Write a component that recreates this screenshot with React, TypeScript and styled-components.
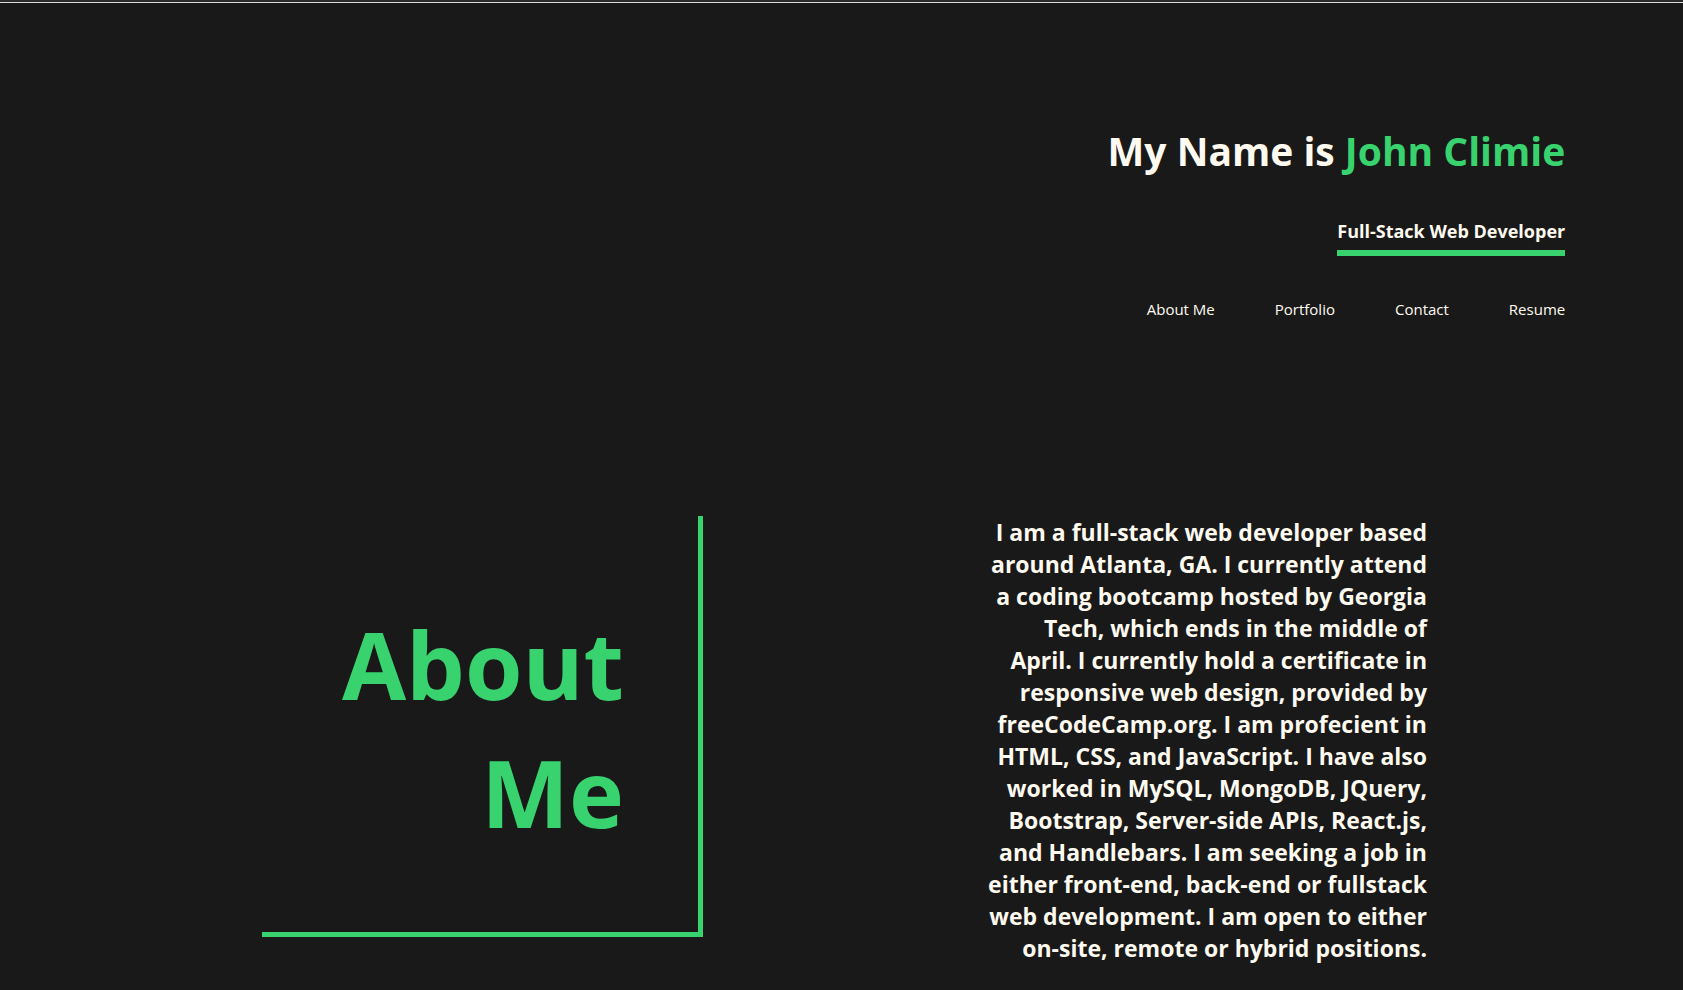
import React from "react";
import styled, { createGlobalStyle } from "styled-components";

const green = "#38d26f";
const cream = "#fffaf0";

const GlobalStyle = createGlobalStyle`
  *, *::before, *::after { box-sizing: border-box; }
  body {
    margin: 0;
    background: #191919;
    color: ${cream};
    font-family: "Segoe UI", "Open Sans", "Noto Sans", sans-serif;
  }
  h1, h2, h3, p, ul { margin: 0; padding: 0; }
`;

const Page = styled.div`
  border-top: 2px solid #2b2b2b;
`;

const Header = styled.header`
  display: flex;
  flex-direction: column;
  align-items: flex-end;
  padding: 120px 7% 0;
  border-top: 1px solid #dcdcdc;
`;

const Name = styled.h1`
  font-size: 39px;
  line-height: 56px;
  font-weight: 700;
`;

const Accent = styled.span`
  color: ${green};
`;

const Role = styled.h3`
  margin-top: 40px;
  padding-bottom: 6px;
  border-bottom: 6px solid ${green};
  font-size: 18px;
  line-height: 25px;
  font-weight: 700;
`;

const NavList = styled.ul`
  display: flex;
  gap: 60px;
  margin-top: 42px;
  list-style: none;
`;

const NavLink = styled.a`
  display: block;
  color: ${cream};
  font-size: 15px;
  line-height: 22px;
  text-decoration: none;
`;

const About = styled.section`
  display: grid;
  grid-template-columns: 1fr 1fr;
  align-items: start;
  column-gap: 283px;
  padding: 196px 256px 26px 262px;
`;

const AboutTitle = styled.h2`
  padding: 84px 74px 76px 0;
  border-right: 5px solid ${green};
  border-bottom: 5px solid ${green};
  color: ${green};
  font-size: 93px;
  line-height: 128px;
  font-weight: 700;
  text-align: right;
`;

const TitleLine = styled.span`
  display: block;
`;

const Bio = styled.p`
  font-size: 23px;
  line-height: 32px;
  font-weight: 700;
  text-align: right;
`;

const links = [
  { label: "About Me", href: "#about" },
  { label: "Portfolio", href: "#portfolio" },
  { label: "Contact", href: "#contact" },
  { label: "Resume", href: "#resume" },
];

export default function App() {
  return (
    <Page>
      <GlobalStyle />
      <Header>
        <Name>
          My Name is <Accent>John Climie</Accent>
        </Name>
        <Role>Full-Stack Web Developer</Role>
        <nav>
          <NavList>
            {links.map((link) => (
              <li key={link.href}>
                <NavLink href={link.href}>{link.label}</NavLink>
              </li>
            ))}
          </NavList>
        </nav>
      </Header>
      <About id="about">
        <AboutTitle>
          <TitleLine>About</TitleLine> <TitleLine>Me</TitleLine>
        </AboutTitle>
        <Bio>
          I am a full-stack web developer based around Atlanta, GA. I currently
          attend a coding bootcamp hosted by Georgia Tech, which ends in the
          middle of April. I currently hold a certificate in responsive web
          design, provided by freeCodeCamp.org. I am profecient in HTML, CSS,
          and JavaScript. I have also worked in MySQL, MongoDB, JQuery,
          Bootstrap, Server-side APIs, React.js, and Handlebars. I am seeking a
          job in either front-end, back-end or fullstack web development. I am
          open to either on-site, remote or hybrid positions.
        </Bio>
      </About>
    </Page>
  );
}
